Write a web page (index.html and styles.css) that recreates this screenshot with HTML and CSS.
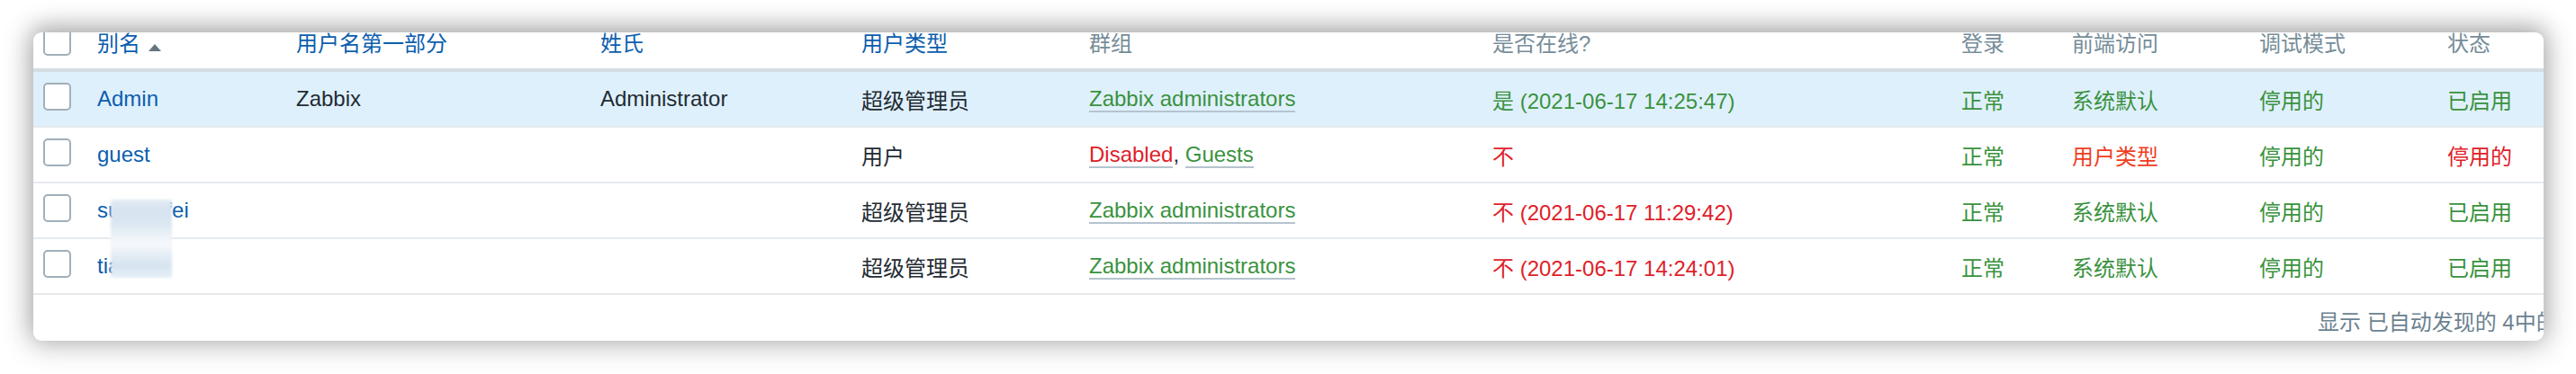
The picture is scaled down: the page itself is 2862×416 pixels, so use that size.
FILE: index.html
```html
<!DOCTYPE html>
<html lang="zh-CN">
<head>
<meta charset="utf-8">
<title>用户</title>
<link rel="stylesheet" href="styles.css">
</head>
<body>
<div class="window">
  <div class="list">
    <div class="row head">
      <div class="cell chk"><span class="checkbox"></span></div>
      <div class="cell"><a class="sort">别名</a><span class="arrow-up"></span></div>
      <div class="cell"><a class="sort">用户名第一部分</a></div>
      <div class="cell"><a class="sort">姓氏</a></div>
      <div class="cell"><a class="sort">用户类型</a></div>
      <div class="cell">群组</div>
      <div class="cell">是否在线?</div>
      <div class="cell">登录</div>
      <div class="cell">前端访问</div>
      <div class="cell">调试模式</div>
      <div class="cell">状态</div>
    </div>

    <div class="row selected">
      <div class="cell chk"><span class="checkbox"></span></div>
      <div class="cell"><a class="link">Admin</a></div>
      <div class="cell">Zabbix</div>
      <div class="cell">Administrator</div>
      <div class="cell">超级管理员</div>
      <div class="cell"><a class="link-alt green">Zabbix administrators</a></div>
      <div class="cell green">是 (2021-06-17 14:25:47)</div>
      <div class="cell green">正常</div>
      <div class="cell green">系统默认</div>
      <div class="cell green">停用的</div>
      <div class="cell green">已启用</div>
    </div>

    <div class="row">
      <div class="cell chk"><span class="checkbox"></span></div>
      <div class="cell"><a class="link">guest</a></div>
      <div class="cell"></div>
      <div class="cell"></div>
      <div class="cell">用户</div>
      <div class="cell"><a class="link-alt red">Disabled</a>, <a class="link-alt green">Guests</a></div>
      <div class="cell red">不</div>
      <div class="cell green">正常</div>
      <div class="cell orange">用户类型</div>
      <div class="cell green">停用的</div>
      <div class="cell red">停用的</div>
    </div>

    <div class="row">
      <div class="cell chk"><span class="checkbox"></span></div>
      <div class="cell"><a class="link">su<span class="redacted"></span>fei</a></div>
      <div class="cell"></div>
      <div class="cell"></div>
      <div class="cell">超级管理员</div>
      <div class="cell"><a class="link-alt green">Zabbix administrators</a></div>
      <div class="cell red">不 (2021-06-17 11:29:42)</div>
      <div class="cell green">正常</div>
      <div class="cell green">系统默认</div>
      <div class="cell green">停用的</div>
      <div class="cell green">已启用</div>
    </div>

    <div class="row">
      <div class="cell chk"><span class="checkbox"></span></div>
      <div class="cell"><a class="link">tia<span class="redacted"></span></a></div>
      <div class="cell"></div>
      <div class="cell"></div>
      <div class="cell">超级管理员</div>
      <div class="cell"><a class="link-alt green">Zabbix administrators</a></div>
      <div class="cell red">不 (2021-06-17 14:24:01)</div>
      <div class="cell green">正常</div>
      <div class="cell green">系统默认</div>
      <div class="cell green">停用的</div>
      <div class="cell green">已启用</div>
    </div>

    <div class="paging">显示 已自动发现的 4中的4</div>
  </div>
  <div class="blur-mask"></div>
</div>
</body>
</html>
```

FILE: styles.css
```css
html, body {
  margin: 0;
  padding: 0;
  background: #ffffff;
  overflow: hidden;
}

body {
  width: 2862px;
  height: 416px;
  font-family: "Liberation Sans", "Noto Sans CJK SC", Arial, sans-serif;
  font-size: 24px;
  color: #1f2c33;
}

.window {
  position: relative;
  margin: 36px 0 0 37px;
  width: 2789px;
  height: 343px;
  overflow: hidden;
  background: #ffffff;
  border-radius: 9px;
  box-shadow: 0 0 30px 4px rgba(0, 0, 0, 0.30), 0 -8px 22px rgba(0, 0, 0, 0.10);
}

.list {
  width: 2830px;
  margin-top: -20px;
}

.row {
  display: grid;
  grid-template-columns: 61px 221px 338px 290px 253px 448px 521px 123px 208px 209px 158px;
  height: 60px;
  border-bottom: 2px solid #e6eaed;
  align-items: center;
}

.row.head {
  border-bottom: 4px solid #d5dde2;
  color: #768d99;
}

.row.selected {
  background: #dff0fd;
}

.cell {
  padding-left: 10px;
  white-space: nowrap;
}

.cell.chk {
  padding-left: 11px;
  display: flex;
  align-items: center;
}

.checkbox {
  display: block;
  box-sizing: border-box;
  width: 31px;
  height: 31px;
  border: 2px solid #a1afb8;
  border-radius: 5px;
  background: #ffffff;
}

.row:not(.head) .checkbox {
  margin-top: -5px;
}

.sort,
.link {
  color: #0c5eae;
  text-decoration: none;
}

.arrow-up {
  display: inline-block;
  width: 0;
  height: 0;
  margin-left: 9px;
  border-left: 7.5px solid transparent;
  border-right: 7.5px solid transparent;
  border-bottom: 8px solid #66767f;
  vertical-align: baseline;
}

.link-alt {
  text-decoration: none;
  border-bottom: 2px solid #b5c4ce;
}

.green {
  color: #3a923e;
}

.red {
  color: #df2129;
}

.orange {
  color: #f03d1f;
}

.redacted {
  display: inline-block;
  width: 51px;
}

.paging {
  box-sizing: border-box;
  height: 51px;
  padding: 17px 12px 0 0;
  line-height: 28px;
  text-align: right;
  color: #6c8290;
  white-space: nowrap;
}

.blur-mask {
  position: absolute;
  left: 86px;
  top: 186px;
  width: 68px;
  height: 87px;
  background: linear-gradient(180deg,
    #e4ecf4 0%,
    #d6e3ef 12%,
    #dae6f1 30%,
    #eef3f8 48%,
    #f5f8fb 58%,
    #e3ecf5 72%,
    #d6e4f0 84%,
    #e6eef6 100%);
  filter: blur(1.5px);
}
```
